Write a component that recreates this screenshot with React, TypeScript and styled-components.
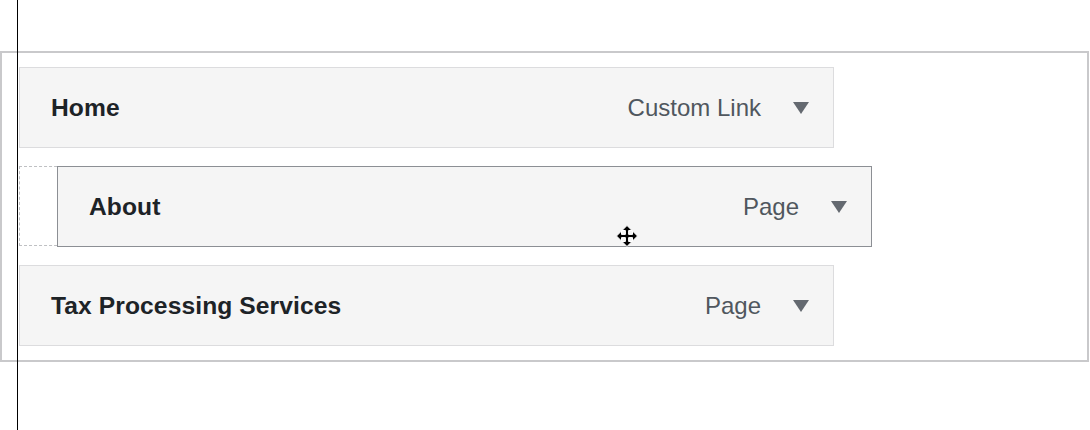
import React from "react";
import styled, { createGlobalStyle } from "styled-components";

const Global = createGlobalStyle`
  html, body { margin: 0; padding: 0; background: #ffffff; }
  body { font-family: "Liberation Sans", Arial, sans-serif; }
`;

const Page = styled.div`
  position: relative;
  width: 1090px;
  height: 430px;
  padding-top: 51px;
  box-sizing: border-box;
`;

const GuideLine = styled.div`
  position: absolute;
  left: 17px;
  top: 0;
  width: 1px;
  height: 430px;
  background: #000000;
  z-index: 5;
`;

const MenuBox = styled.div`
  width: 1089px;
  box-sizing: border-box;
  border: 2px solid #c9c9cb;
  padding: 14px 0 14px 17px;
  display: flex;
  flex-direction: column;
  gap: 18px;
`;

const Slot = styled.div`
  position: relative;
  width: 815px;
  height: 81px;
`;

const Placeholder = styled.div`
  width: 815px;
  height: 80px;
  box-sizing: border-box;
  border: 1px dashed #bfc0c3;
`;

const Card = styled.div<{ $dragging?: boolean }>`
  width: 815px;
  height: 81px;
  box-sizing: border-box;
  background: #f5f5f5;
  border: 1px solid ${(p) => (p.$dragging ? "#8c8f94" : "#dcdcde")};
  display: flex;
  align-items: center;
  padding: 0 24px 0 31px;
  ${(p) =>
    p.$dragging
      ? `position: absolute; left: 38px; top: 0; z-index: 2;`
      : ""}
`;

const Title = styled.span`
  flex: 1;
  font-size: 24.6px;
  font-weight: 700;
  color: #1d2327;
  letter-spacing: 0.1px;
`;

const Type = styled.span`
  font-size: 24px;
  color: #50575e;
  margin-right: 32px;
`;

const Arrow = styled.span`
  width: 0;
  height: 0;
  border-left: 8px solid transparent;
  border-right: 8px solid transparent;
  border-top: 12px solid #646970;
  margin-top: 1px;
`;

const Cursor = styled.svg`
  position: absolute;
  left: 596px;
  top: 58px;
  z-index: 3;
`;

type Item = { title: string; type: string };

const Row = ({ item, dragging }: { item: Item; dragging?: boolean }) => (
  <Card $dragging={dragging}>
    <Title>{item.title}</Title>
    <Type>{item.type}</Type>
    <Arrow />
  </Card>
);

export default function App() {
  return (
    <Page>
      <Global />
      <GuideLine />
      <MenuBox>
        <Slot>
          <Row item={{ title: "Home", type: "Custom Link" }} />
        </Slot>
        <Slot>
          <Placeholder />
          <Row item={{ title: "About", type: "Page" }} dragging />
          <Cursor width="24" height="24" viewBox="0 0 24 24">
            <path
              d="M12 1.5 L17 6.5 L13.6 6.5 L13.6 10.4 L17.5 10.4 L17.5 7 L22.5 12 L17.5 17 L17.5 13.6 L13.6 13.6 L13.6 17.5 L17 17.5 L12 22.5 L7 17.5 L10.4 17.5 L10.4 13.6 L6.5 13.6 L6.5 17 L1.5 12 L6.5 7 L6.5 10.4 L10.4 10.4 L10.4 6.5 L7 6.5 Z"
              fill="#000"
              stroke="#fff"
              strokeWidth="1"
              strokeLinejoin="round"
            />
          </Cursor>
        </Slot>
        <Slot>
          <Row item={{ title: "Tax Processing Services", type: "Page" }} />
        </Slot>
      </MenuBox>
    </Page>
  );
}
